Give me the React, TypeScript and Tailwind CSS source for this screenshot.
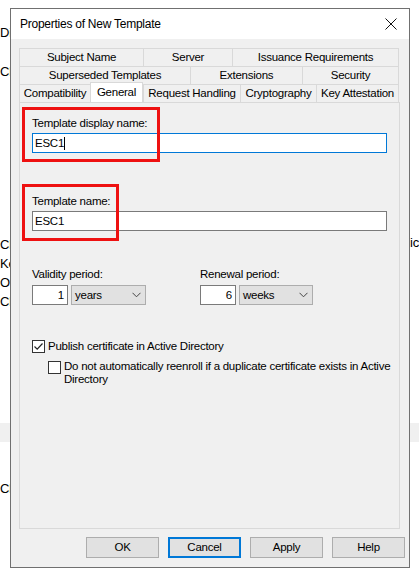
import { ReactNode } from "react";

const font = { fontFamily: '"Liberation Sans", Arial, sans-serif' };

const Tab = ({ label, w, selected }: { label: string; w: string; selected?: boolean }) => (
  <div
    className={
      selected
        ? `${w} h-[20px] -mt-[2px] bg-white border border-b-0 border-[#d9d9d9] flex items-center justify-center whitespace-nowrap relative z-10`
        : `${w} h-[18px] bg-[#f0f0f0] border-l border-t border-[#d9d9d9] flex items-center justify-center whitespace-nowrap`
    }
  >
    {label}
  </div>
);

const Chevron = () => (
  <svg width="9" height="6" viewBox="0 0 9 6" className="ml-auto mr-[4px]">
    <path d="M0.5 0.8 L4.5 4.8 L8.5 0.8" fill="none" stroke="#444" strokeWidth="1" />
  </svg>
);

const Combo = ({ value, w }: { value: string; w: string }) => (
  <div className={`${w} h-[20px] bg-[#e1e1e1] border border-[#adadad] flex items-center pl-[3px]`}>
    <span>{value}</span>
    <Chevron />
  </div>
);

const NumBox = ({ value }: { value: string }) => (
  <div className="w-[36px] h-[20px] bg-white border border-[#7a7a7a] flex items-center justify-end pr-[3px]">
    {value}
  </div>
);

const Checkbox = ({ checked }: { checked?: boolean }) => (
  <div className="w-[13px] h-[13px] bg-white border border-[#333] flex items-center justify-center shrink-0">
    {checked && (
      <svg width="11" height="11" viewBox="0 0 11 11">
        <path d="M1.5 5.5 L4.2 8.2 L9.5 2.5" fill="none" stroke="#222" strokeWidth="1.2" />
      </svg>
    )}
  </div>
);

const Button = ({ children, focused }: { children: ReactNode; focused?: boolean }) => (
  <div
    className={
      focused
        ? "w-[73px] h-[21px] bg-[#e1e1e1] border-2 border-[#0078d7] flex items-center justify-center"
        : "w-[73px] h-[21px] bg-[#e1e1e1] border border-[#adadad] flex items-center justify-center"
    }
  >
    {children}
  </div>
);

export default function App() {
  return (
    <div
      className="relative w-[419px] h-[578px] bg-white overflow-hidden text-[11.5px] tracking-[-0.25px] leading-[15px] text-black"
      style={font}
    >
      {/* desktop behind the dialog */}
      <div className="absolute left-0 top-[423px] w-full h-[19px] bg-[#f0f0f0]" />
      <div className="absolute left-0 top-[25px] text-[13px]">Di</div>
      <div className="absolute left-0 top-[64px] text-[13px]">Cl</div>
      <div className="absolute left-0 top-[235px] text-[13px] leading-[19px]">
        <div>Cl</div>
        <div>Ke</div>
        <div>Oı</div>
        <div>Cl</div>
      </div>
      <div className="absolute left-[410px] top-[235px] text-[13px]">ic</div>
      <div className="absolute left-0 top-[481px] text-[13px]">Cl</div>

      {/* dialog window */}
      <div className="absolute left-[10px] top-[8px] w-[400px] h-[560px] border border-[#707070] bg-[#f0f0f0] flex flex-col">
        <div className="h-[30px] bg-white flex items-center pl-[9px] pr-[12px] shrink-0">
          <span className="text-[12px]">Properties of New Template</span>
          <svg width="12" height="12" viewBox="0 0 12 12" className="ml-auto">
            <path d="M0.5 0.5 L11.5 11.5 M11.5 0.5 L0.5 11.5" stroke="#111" strokeWidth="1" />
          </svg>
        </div>

        <div className="flex flex-col pl-[8px] pt-[9px]">
          {/* tab rows */}
          <div className="w-[380px] flex flex-col">
            <div className="flex border-r border-[#d9d9d9]">
              <Tab label="Subject Name" w="w-[124px]" />
              <Tab label="Server" w="w-[89px]" />
              <Tab label="Issuance Requirements" w="flex-1" />
            </div>
            <div className="flex border-r border-[#d9d9d9]">
              <Tab label="Superseded Templates" w="w-[171px]" />
              <Tab label="Extensions" w="w-[112px]" />
              <Tab label="Security" w="flex-1" />
            </div>
            <div className="flex items-end border-r border-[#d9d9d9]">
              <Tab label="Compatibility" w="w-[71px]" />
              <Tab label="General" w="w-[53px]" selected />
              <Tab label="Request Handling" w="w-[97px]" />
              <Tab label="Cryptography" w="w-[76px]" />
              <Tab label="Key Attestation" w="flex-1" />
            </div>
          </div>

          {/* tab page */}
          <div className="relative w-[381px] h-[427px] border border-[#d9d9d9] bg-[#f0f0f0] pl-[12px] pr-[12px] flex flex-col">
            <div className="mt-[13px]">Template display name:</div>
            <div className="mt-[2px] h-[20px] bg-white border border-[#0078d7] flex items-center pl-[2px]">
              <span>ESC1</span>
              <span className="w-px h-[13px] bg-black" />
            </div>

            <div className="mt-[41px]">Template name:</div>
            <div className="mt-[2px] h-[20px] bg-white border border-[#7a7a7a] flex items-center pl-[2px]">
              ESC1
            </div>

            <div className="flex mt-[36px]">
              <div className="w-[168px] flex flex-col">
                <div>Validity period:</div>
                <div className="flex gap-[3px] mt-[3px]">
                  <NumBox value="1" />
                  <Combo value="years" w="w-[75px]" />
                </div>
              </div>
              <div className="flex flex-col">
                <div>Renewal period:</div>
                <div className="flex gap-[3px] mt-[3px]">
                  <NumBox value="6" />
                  <Combo value="weeks" w="w-[74px]" />
                </div>
              </div>
            </div>

            <div className="flex items-center gap-[3px] mt-[34px]">
              <Checkbox checked />
              <span>Publish certificate in Active Directory</span>
            </div>
            <div className="flex items-start gap-[3px] mt-[6px] ml-[16px] -mr-[10px] leading-[13px]">
              <div className="mt-[1px]">
                <Checkbox />
              </div>
              <span>Do not automatically reenroll if a duplicate certificate exists in Active Directory</span>
            </div>

            {/* annotation boxes */}
            <div className="absolute left-[2px] top-[4px] w-[138px] h-[55px] border-[3px] border-[#ee1111]" />
            <div className="absolute left-[2px] top-[81px] w-[97px] h-[57px] border-[3px] border-[#ee1111]" />
          </div>
        </div>

        {/* buttons */}
        <div className="flex gap-[9px] mt-[8px] pl-[75px]">
          <Button>OK</Button>
          <Button focused>Cancel</Button>
          <Button>Apply</Button>
          <Button>Help</Button>
        </div>
      </div>
    </div>
  );
}
